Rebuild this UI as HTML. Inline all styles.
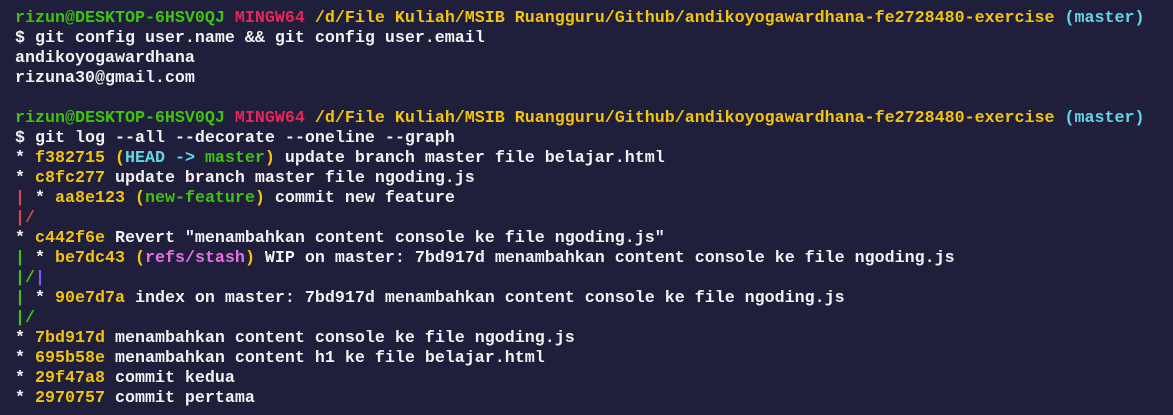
<!DOCTYPE html>
<html><head><meta charset="utf-8"><style>
html,body{margin:0;padding:0;}
body{width:1173px;height:415px;background:#1f1f3b;overflow:hidden;}
pre{margin:0;padding:9px 0 0 15px;font-family:"Liberation Mono",monospace;font-size:16.67px;line-height:20px;color:#f2f2f2;font-weight:bold;}
.g{color:#3fc30f}.m{color:#e8245e}.y{color:#f2c40f}.c{color:#61d6e6}.p{color:#e86ee8}.r{color:#d04a4a}.v{color:#7a5cf0}
</style></head><body><pre><span class="g">rizun@DESKTOP-6HSV0QJ</span> <span class="m">MINGW64</span> <span class="y">/d/File Kuliah/MSIB Ruangguru/Github/andikoyogawardhana-fe2728480-exercise</span> <span class="c">(master)</span>
$ git config user.name &amp;&amp; git config user.email
andikoyogawardhana
rizuna30@gmail.com

<span class="g">rizun@DESKTOP-6HSV0QJ</span> <span class="m">MINGW64</span> <span class="y">/d/File Kuliah/MSIB Ruangguru/Github/andikoyogawardhana-fe2728480-exercise</span> <span class="c">(master)</span>
$ git log --all --decorate --oneline --graph
* <span class="y">f382715 (</span><span class="c">HEAD -&gt; </span><span class="g">master</span><span class="y">)</span> update branch master file belajar.html
* <span class="y">c8fc277</span> update branch master file ngoding.js
<span class="r">|</span> * <span class="y">aa8e123 (</span><span class="g">new-feature</span><span class="y">)</span> commit new feature
<span class="r">|/</span>
* <span class="y">c442f6e</span> Revert "menambahkan content console ke file ngoding.js"
<span class="g">|</span> * <span class="y">be7dc43 (</span><span class="p">refs/stash</span><span class="y">)</span> WIP on master: 7bd917d menambahkan content console ke file ngoding.js
<span class="g">|/</span><span class="v">|</span>
<span class="g">|</span> * <span class="y">90e7d7a</span> index on master: 7bd917d menambahkan content console ke file ngoding.js
<span class="g">|/</span>
* <span class="y">7bd917d</span> menambahkan content console ke file ngoding.js
* <span class="y">695b58e</span> menambahkan content h1 ke file belajar.html
* <span class="y">29f47a8</span> commit kedua
* <span class="y">2970757</span> commit pertama
</pre></body></html>
